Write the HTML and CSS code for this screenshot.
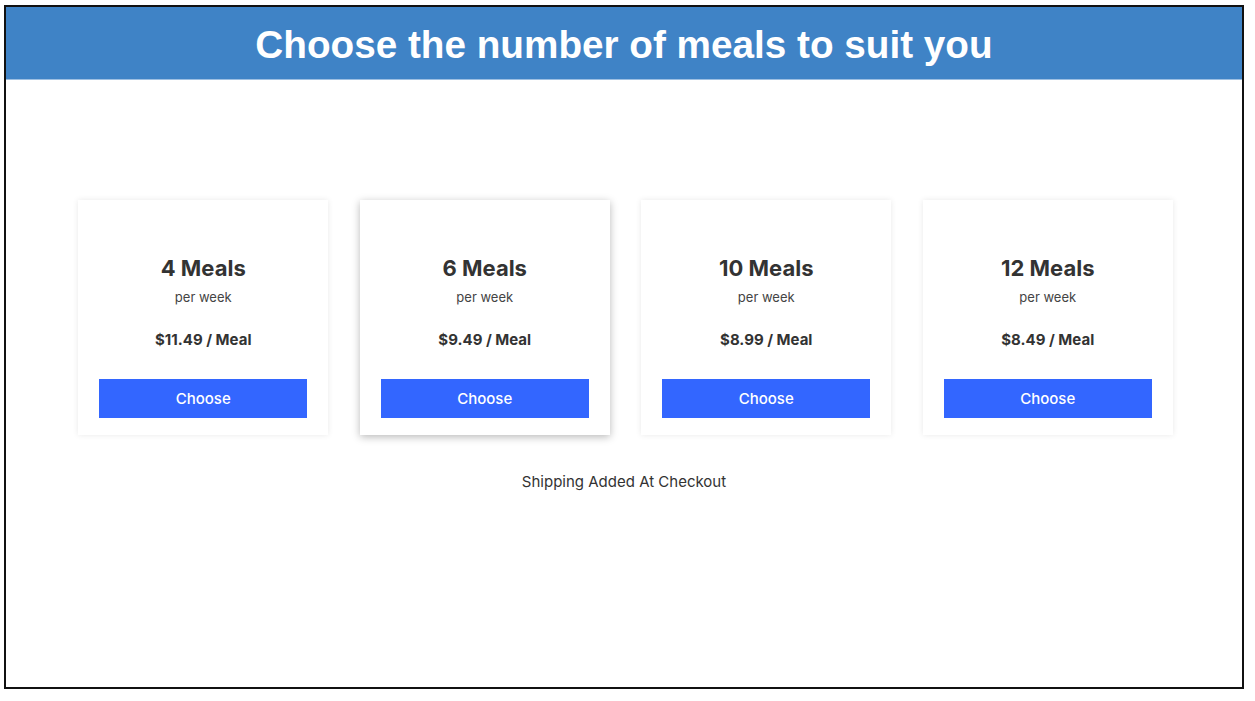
FILE: index.html
```html
<!DOCTYPE html>
<html>
<head>
<meta charset="utf-8">
<link rel="stylesheet" href="styles.css">
</head>
<body>
<div class="frame">
  <header class="banner">Choose the number of meals to suit you</header>
  <main class="content">
    <div class="cards">
      <div class="card">
        <div class="meals">4 Meals</div>
        <div class="per">per week</div>
        <div class="price">$11.49 / Meal</div>
        <div class="btn">Choose</div>
      </div>
      <div class="card featured">
        <div class="meals">6 Meals</div>
        <div class="per">per week</div>
        <div class="price">$9.49 / Meal</div>
        <div class="btn">Choose</div>
      </div>
      <div class="card">
        <div class="meals">10 Meals</div>
        <div class="per">per week</div>
        <div class="price">$8.99 / Meal</div>
        <div class="btn">Choose</div>
      </div>
      <div class="card">
        <div class="meals">12 Meals</div>
        <div class="per">per week</div>
        <div class="price">$8.49 / Meal</div>
        <div class="btn">Choose</div>
      </div>
    </div>
    <div class="shipping">Shipping Added At Checkout</div>
  </main>
</div>
</body>
</html>
```
FILE: styles.css
```css
html, body {
  margin: 0;
  padding: 0;
  background: #ffffff;
}
body {
  padding: 5px 0 0 4px;
}
.frame {
  box-sizing: border-box;
  width: 1240px;
  height: 684px;
  border: 2px solid #111111;
  display: flex;
  flex-direction: column;
}
.banner {
  box-sizing: border-box;
  height: 73px;
  padding-top: 3px;
  background: #3f83c6;
  border-bottom: 1px solid #9dbfe2;
  color: #ffffff;
  font-family: "Liberation Sans", Arial, sans-serif;
  font-weight: bold;
  font-size: 38.7px;
  display: flex;
  align-items: center;
  justify-content: center;
}
.content {
  padding-top: 120px;
  padding-left: 3px;
  display: flex;
  flex-direction: column;
  align-items: center;
  font-family: Inter, "Noto Sans", sans-serif;
  color: #333333;
}
.cards {
  display: flex;
  gap: 31.5px;
}
.card {
  box-sizing: border-box;
  width: 250px;
  height: 235px;
  background: #ffffff;
  box-shadow: 0 0 6px rgba(0, 0, 0, 0.09);
  display: flex;
  flex-direction: column;
  align-items: center;
  padding: 55px 21px 0;
}
.card.featured {
  box-shadow: 0 2px 8px rgba(0, 0, 0, 0.28);
}
.meals {
  font-size: 22px;
  font-weight: 700;
  line-height: 27px;
  color: #333333;
}
.per {
  font-size: 13px;
  line-height: 16px;
  margin-top: 7px;
  color: #444444;
}
.price {
  font-size: 15px;
  font-weight: 700;
  line-height: 18px;
  margin-top: 26px;
  color: #333333;
}
.btn {
  margin-top: 30px;
  width: 208px;
  height: 39px;
  background: #3366ff;
  color: #ffffff;
  font-size: 15px;
  font-weight: 500;
  display: flex;
  align-items: center;
  justify-content: center;
}
.shipping {
  margin-top: 37px;
  margin-right: 3px;
  font-size: 15px;
  color: #333333;
}
```
